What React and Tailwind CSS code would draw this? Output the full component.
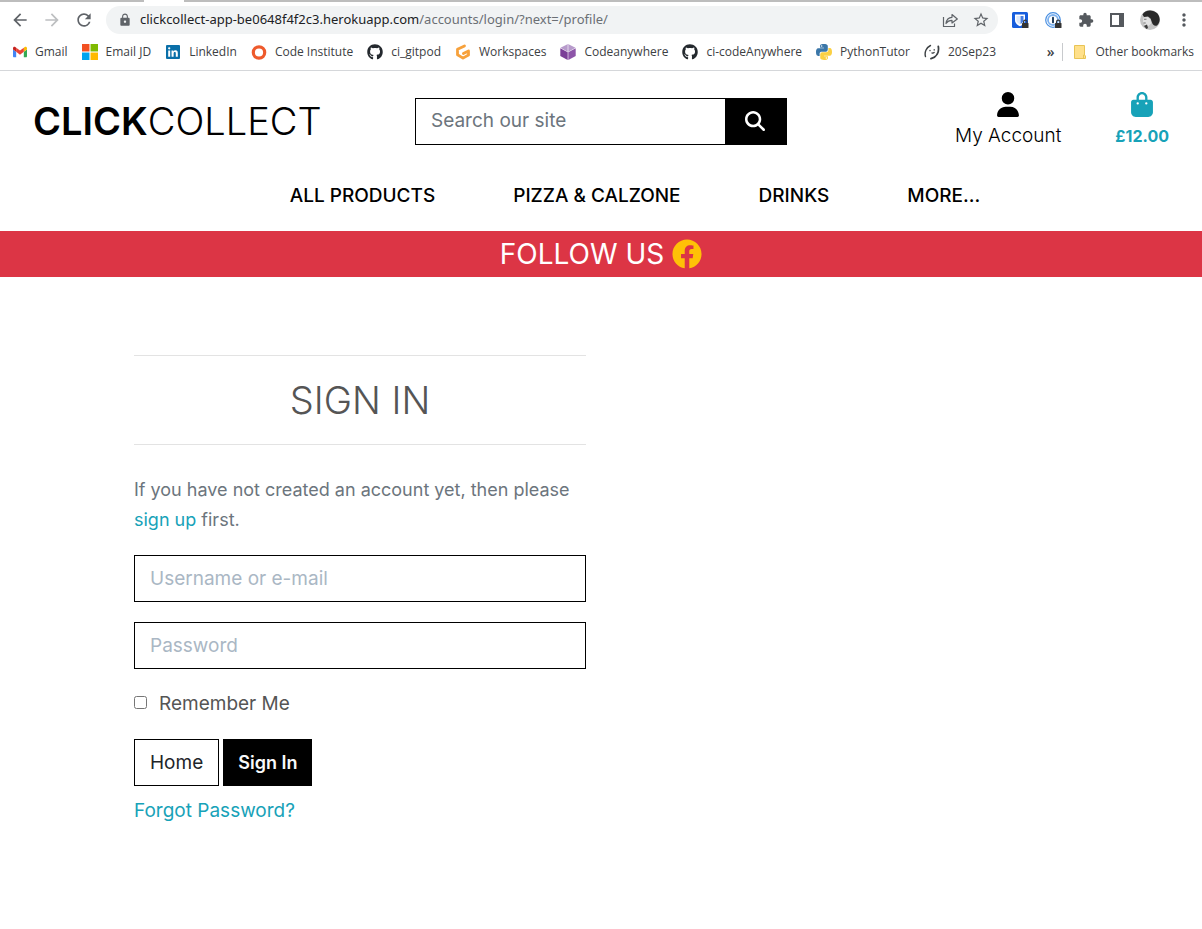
import React from "react";
import { FaUser, FaBagShopping, FaMagnifyingGlass } from "react-icons/fa6";
import { FaGithub } from "react-icons/fa";
import {
  MdArrowBack,
  MdArrowForward,
  MdRefresh,
  MdLock,
  MdStarBorder,
  MdExtension,
  MdMoreVert,
} from "react-icons/md";

const GmailIcon = () => (
  <svg viewBox="52 42 88 66" className="h-3.5 w-3.5">
    <path fill="#4285f4" d="M58 108h14V74L52 59v43c0 3.32 2.69 6 6 6" />
    <path fill="#34a853" d="M120 108h14c3.32 0 6-2.69 6-6V59l-20 15" />
    <path fill="#fbbc04" d="M120 48v26l20-15v-8c0-7.42-8.47-11.65-14.4-7.2" />
    <path fill="#ea4335" d="M72 74V48l24 18 24-18v26L96 92" />
    <path fill="#c5221f" d="M52 51v8l20 15V48l-5.600-4.200c-5.940-4.450-14.400-.22-14.400 7.200" />
  </svg>
);

const MicrosoftIcon = () => (
  <svg viewBox="0 0 15 15" className="h-4 w-4">
    <path fill="#f25022" d="M0 0h7v7H0z" />
    <path fill="#7fba00" d="M8 0h7v7H8z" />
    <path fill="#00a4ef" d="M0 8h7v7H0z" />
    <path fill="#ffb900" d="M8 8h7v7H8z" />
  </svg>
);

const LinkedInIcon = () => (
  <svg viewBox="0 0 16 16" className="h-4 w-4">
    <rect x="1" y="1" width="14" height="14" rx="1" fill="#0a6fa8" />
    <path fill="#fff" d="M3.200 6.500h2v6.300h-2zM4.200 3.200a1.150 1.150 0 1 1 0 2.300 1.150 1.150 0 0 1 0-2.300M6.500 6.500h1.900v.9c.4-.7 1.100-1.100 2-1.100 1.900 0 2.400 1.200 2.400 3v3.500h-2V9.700c0-.9-.1-1.600-1-1.600s-1.200.6-1.200 1.600v3.100h-2z" />
  </svg>
);

const RingIcon = () => (
  <svg viewBox="0 0 16 16" className="h-4 w-4">
    <circle cx="8" cy="8.500" r="5.700" fill="none" stroke="#ee5a2c" strokeWidth="3.200" />
  </svg>
);

const GitpodIcon = () => (
  <svg viewBox="0 0 16 16" className="h-4 w-4">
    <path
      fill="none"
      stroke="#f7a13b"
      strokeWidth="2.800"
      strokeLinejoin="round"
      strokeLinecap="round"
      d="M9.500 1.900 2.500 5.300v5.500L8 14.100l5.500-3.100V7L8.400 9.600"
    />
  </svg>
);

const CubeIcon = () => (
  <svg viewBox="0 0 16 16" className="h-4 w-4">
    <path fill="#b79bcb" d="M8 0l7.500 3.800L8 8 .5 3.800z" />
    <path fill="#7b3f98" d="M.3 4.300 7.700 8.300V16L.3 12z" />
    <path fill="#8d55a8" d="M15.700 4.300 8.300 8.300V16l7.400-4z" />
    <path stroke="#efe6f4" strokeWidth=".8" d="M8 0v8" />
  </svg>
);

const PythonIcon = () => (
  <svg viewBox="0 0 110 110" className="h-4 w-4">
    <path fill="#3a76a8" d="M54 0c-28 0-26 12-26 12v13h27v4H17S0 27 0 55s15 27 15 27h10V68s-1-15 15-15h26s15 0 15-15V15S83 0 54 0M39 9a5 5 0 1 1 0 10 5 5 0 0 1 0-10" />
    <path fill="#fbd043" d="M56 110c28 0 26-12 26-12V85H55v-4h38s17 2 17-26-15-27-15-27H85v14s1 15-15 15H44s-15 0-15 15v23s-2 15 27 15m15-9a5 5 0 1 1 0-10 5 5 0 0 1 0 10" />
  </svg>
);

const OrbitIcon = () => (
  <svg viewBox="0 0 16 16" className="h-4 w-4" fill="none" stroke="#3c4043" strokeLinecap="round">
    <path strokeWidth="1.400" d="M6.500 1.500C2.500 3.500.2 8 1.500 12.500" />
    <path strokeWidth="1.800" d="M14.300 2.500c1 5.500-1.500 10.500-7.300 12.200" />
    <path strokeWidth="1.300" d="M6 6.300v.4M10.200 5.600v.4M8 9c.9.200 1.700 0 2.200-.6" />
  </svg>
);

const ShareIcon = () => (
  <svg viewBox="0 0 16 16" className="h-4 w-4" fill="none" stroke="#5f6368" strokeWidth="1.200" strokeLinejoin="round">
    <path d="M1.500 5v9.500h11V11.500" />
    <path d="M4 11.500C4.500 7.500 6.500 5.500 10 5.300V2.500L15.300 7 10 11V8.400c-2.700 0-4.500.9-6 3.100z" />
  </svg>
);

const MiniLock = () => (
  <>
    <rect x="10" y="11" width="6.500" height="5" rx=".6" fill="#333" />
    <path d="M11.500 11V9.900a1.750 1.750 0 0 1 3.500 0V11" fill="none" stroke="#333" strokeWidth="1.100" />
  </>
);

const ShieldIcon = () => (
  <svg viewBox="0 0 17 17" className="h-[17px] w-[17px]">
    <rect width="16" height="16" rx="1.500" fill="#175ddc" />
    <path fill="#fff" d="M3 2.500h10V8c0 3.500-2.500 5-5 6.300C5.500 13 3 11.500 3 8z" />
    <path fill="#175ddc" d="M4.400 4H8v8.500C5.900 11.400 4.400 10 4.400 8z" opacity=".15" />
    <path fill="#175ddc" d="M8.500 4h3v4c0 1.800-1.200 3-3 4z" opacity=".8" />
    <MiniLock />
  </svg>
);

const KeyringIcon = () => (
  <svg viewBox="0 0 17 17" className="h-[17px] w-[17px]">
    <circle cx="8" cy="8" r="7.300" fill="none" stroke="#4a90e2" strokeWidth="1.200" />
    <circle cx="8" cy="8" r="5" fill="#fff" stroke="#7fb2ee" strokeWidth="1.800" />
    <rect x="7" y="4.800" width="2" height="6.500" rx=".8" fill="#24405f" />
    <MiniLock />
  </svg>
);

const PanelIcon = () => (
  <svg viewBox="0 0 14 14" className="h-3.5 w-3.5">
    <path fill="#55595e" fillRule="evenodd" d="M0 0h14v14H0zM2 2v10h7V2z" />
  </svg>
);

const Avatar = () => (
  <svg viewBox="0 0 20 20" className="h-5 w-5">
    <circle cx="10" cy="10" r="10" fill="#c4c4c4" />
    <path fill="#292929" d="M2.500 4.500C5-.5 13-1 17.500 3.500c3.200 4 2.800 9-.5 12-2.500.8-4.500-.5-5-3L10.500 8.500 8 6.500 4 7z" />
    <path fill="#e2e2e2" d="M3.500 7.500 7.500 7l3 2.500.5 4-2.500 2.500-4-1-1.500-3.500z" />
    <path fill="#777" d="M4 8.800h2.500v.9H4zM3.500 12.500h2.200v.9H3.500z" />
    <path fill="#3a3a3a" d="M4 16l3-1.500 1 3.500-1.500 1z" />
  </svg>
);

const FolderIcon = () => (
  <svg viewBox="0 0 14 16" className="h-4 w-3.5">
    <path fill="#ffe08a" stroke="#e8c455" d="M1.500 1.500h10v9.500l1 1v2.500h-11z" />
    <path fill="none" stroke="#e8c455" d="M10.500 14v-3h1" />
  </svg>
);

const FacebookIcon = () => (
  <svg viewBox="0 0 512 512" className="h-[30px] w-[30px]" role="img" aria-label="Facebook">
    <path
      fill="#ffc107"
      d="M504 256C504 119 393 8 256 8S8 119 8 256c0 123.780 90.690 226.380 209.250 245V327.690h-63V256h63v-54.640c0-62.150 37-96.480 93.670-96.480 27.140 0 55.520 4.840 55.520 4.840v61h-31.280c-30.800 0-40.410 19.120-40.410 38.730V256h68.780l-11 71.690h-57.780V501C413.310 482.380 504 379.780 504 256z"
    />
  </svg>
);

const GithubMark = () => <FaGithub className="h-4 w-4 text-[#24292e]" />;

const bookmarks = [
  { label: "Gmail", Icon: GmailIcon },
  { label: "Email JD", Icon: MicrosoftIcon },
  { label: "LinkedIn", Icon: LinkedInIcon },
  { label: "Code Institute", Icon: RingIcon },
  { label: "ci_gitpod", Icon: GithubMark },
  { label: "Workspaces", Icon: GitpodIcon },
  { label: "Codeanywhere", Icon: CubeIcon },
  { label: "ci-codeAnywhere", Icon: GithubMark },
  { label: "PythonTutor", Icon: PythonIcon },
  { label: "20Sep23", Icon: OrbitIcon },
];

function BrowserBar() {
  return (
    <div className="border-b border-[#d5d7da] bg-white font-['Open_Sans','Noto_Sans',sans-serif] text-[#3c4043]">
      <div className="flex h-0.5 bg-[#bdbdbd]">
        <div className="ml-36 w-10 bg-white" />
      </div>
      <div className="flex items-center pt-1 pr-2.5 pl-2.5">
        <div className="flex items-center gap-3 text-[#5f6368]">
          <button aria-label="Back"><MdArrowBack className="h-5 w-5" /></button>
          <button aria-label="Forward" className="text-[#bdbfc1]"><MdArrowForward className="h-5 w-5" /></button>
          <button aria-label="Reload"><MdRefresh className="h-5 w-5" /></button>
        </div>
        <div className="ml-3 flex h-7 min-w-0 flex-1 items-center rounded-full bg-[#f1f3f4] pr-2 pl-3">
          <MdLock className="h-3.5 w-3.5 shrink-0 text-[#5f6368]" />
          <div className="ml-2 min-w-0 flex-1 truncate font-['Noto_Sans',sans-serif] text-[13px] text-[#202124]">
            clickcollect-app-be0648f4f2c3.herokuapp.com
            <span className="text-[#6b6f74]">/accounts/login/?next=/profile/</span>
          </div>
          <button aria-label="Share"><ShareIcon /></button>
          <button aria-label="Bookmark" className="ml-3.5 text-[#5f6368]"><MdStarBorder className="h-[18px] w-[18px]" /></button>
        </div>
        <div className="ml-3.5 flex items-center gap-4 text-[#55595e]">
          <button aria-label="Vault"><ShieldIcon /></button>
          <button aria-label="Passwords"><KeyringIcon /></button>
          <button aria-label="Extensions"><MdExtension className="h-4 w-4" /></button>
          <button aria-label="Side panel"><PanelIcon /></button>
          <button aria-label="Profile"><Avatar /></button>
          <button aria-label="Menu" className="-mx-0.5"><MdMoreVert className="h-5 w-5" /></button>
        </div>
      </div>
      <div className="flex h-9 items-center pr-2 pl-[13px] text-[12px]">
        <div className="flex items-center gap-3.5">
          {bookmarks.map(({ label, Icon }) => (
            <a key={label} href="#" className="flex items-center gap-2 whitespace-nowrap">
              <Icon />
              {label}
            </a>
          ))}
        </div>
        <button aria-label="More bookmarks" className="ml-auto font-semibold text-[14px] leading-4">»</button>
        <a href="#" className="ml-2 flex items-center gap-2 border-l border-[#c8cacd] pl-2.5 whitespace-nowrap">
          <FolderIcon />
          Other bookmarks
        </a>
      </div>
    </div>
  );
}

function Header() {
  return (
    <header className="text-black">
      <div className="grid grid-cols-3 items-center px-[33px] pt-5">
        <a href="#" className="text-[38px] leading-[60px] whitespace-nowrap">
          <strong className="font-semibold">CLICK</strong>
          <span className="font-light">COLLECT</span>
        </a>
        <form className="flex h-[47px] w-[372px] justify-self-center border border-black" onSubmit={(e) => e.preventDefault()}>
          <input
            aria-label="Search our site"
            placeholder="Search our site"
            className="min-w-0 flex-1 px-[15px] text-[19px] outline-none placeholder:text-[#6c757d]"
          />
          <button aria-label="Search" className="flex w-[61px] items-center justify-center bg-black text-white">
            <FaMagnifyingGlass className="h-5 w-5" />
          </button>
        </form>
        <div className="flex justify-end gap-[54px] text-[19px] leading-[30px]">
          <a href="#" className="flex flex-col items-center gap-1">
            <FaUser className="h-[25px] w-[22px]" />
            <span className="font-light">My Account</span>
          </a>
          <a href="#" className="flex flex-col items-center gap-1 text-[#17a2b8]">
            <FaBagShopping className="h-[25px] w-[22px]" />
            <span className="text-[16px] leading-[30px] font-bold">£12.00</span>
          </a>
        </div>
      </div>
      <nav className="flex justify-center gap-[78px] pt-[30px] pb-5 pl-[68px] text-[19px] leading-[30px] font-medium">
        <a href="#">ALL PRODUCTS</a>
        <a href="#">PIZZA &amp; CALZONE</a>
        <a href="#">DRINKS</a>
        <a href="#">MORE...</a>
      </nav>
      <div className="flex h-[46px] items-center justify-center gap-2 bg-[#dc3545] text-[28px] text-white">
        <span>FOLLOW US</span>
        <a href="#"><FacebookIcon /></a>
      </div>
    </header>
  );
}

function SignIn() {
  const field =
    "block h-[47px] w-full border border-black px-[15px] text-[19px] outline-none placeholder:text-[#aab7c4]";
  return (
    <main className="px-[134px] pt-[78px] pb-24 text-[19px] leading-[30px] text-[#555]">
      <div className="max-w-[452px]">
        <h1 className="border-y border-[#e3e3e3] py-5 text-center text-[38px] leading-[48px] font-light">SIGN IN</h1>
        <p className="mt-[30px] text-[18px] leading-[30px] text-[#6c757d]">
          If you have not created an account yet, then please{" "}
          <a href="#" className="text-[#17a2b8]">sign up</a> first.
        </p>
        <form className="mt-5" onSubmit={(e) => e.preventDefault()}>
          <input aria-label="Username or e-mail" placeholder="Username or e-mail" className={field} />
          <input type="password" aria-label="Password" placeholder="Password" className={"mt-5 " + field} />
          <label className="mt-5 flex items-center gap-3">
            <input type="checkbox" className="mb-1 h-[13px] w-[13px]" />
            Remember Me
          </label>
          <div className="mt-5 flex gap-1">
            <a href="#" className="flex h-[47px] items-center border border-black px-[15px] text-[#212529]">Home</a>
            <button className="h-[47px] bg-black px-[15px] text-[18px] font-semibold text-[#f8f9fa]">Sign In</button>
          </div>
          <a href="#" className="mt-2.5 inline-block text-[#17a2b8]">Forgot Password?</a>
        </form>
      </div>
    </main>
  );
}

export default function App() {
  return (
    <div className="min-h-screen bg-white font-['Inter',sans-serif]">
      <BrowserBar />
      <Header />
      <SignIn />
    </div>
  );
}
